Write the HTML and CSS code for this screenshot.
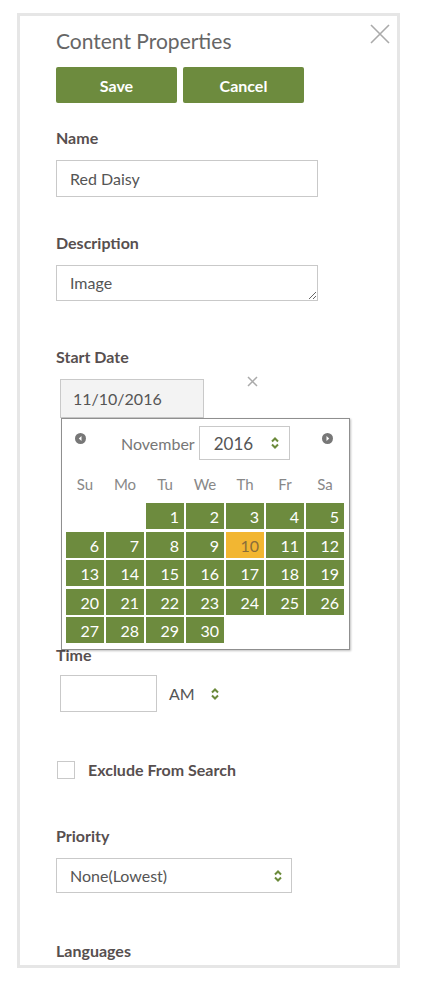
FILE: index.html
```html
<!DOCTYPE html>
<html lang="en">
<head>
    <meta charset="UTF-8">
    <title>Content Properties</title>
    <link rel="stylesheet" href="styles.css">
</head>
<body>
    <div class="panel">
        <div class="panel-head">
            <h1 class="panel-title">Content Properties</h1>
            <svg class="close-icon" width="20" height="20" viewBox="0 0 20 20">
                <path d="M1 1 L19 19 M19 1 L1 19" stroke="#aaa" stroke-width="1.6" fill="none"/>
            </svg>
        </div>

        <div class="actions">
            <button class="btn">Save</button>
            <button class="btn">Cancel</button>
        </div>

        <label class="field-label label-name">Name</label>
        <input class="text-input name-input" type="text" value="Red Daisy">

        <label class="field-label label-desc">Description</label>
        <textarea class="text-input desc-input">Image</textarea>

        <label class="field-label label-start">Start Date</label>
        <div class="date-row">
            <div class="date-field">
                <div class="date-input">11/10/2016</div>

                <!-- calendar popup -->
                <div class="calendar">
                    <div class="cal-nav">
                        <span class="nav-btn prev">
                            <svg width="11" height="11" viewBox="0 0 11 11"><circle cx="5.5" cy="5.5" r="5.5" fill="#777"/><path d="M6.5 3 L3.8 5.5 L6.5 8 Z" fill="#fff"/></svg>
                        </span>
                        <span class="cal-month">November</span>
                        <span class="cal-year">
                            2016
                            <svg class="updown" width="10" height="14" viewBox="0 0 10 14"><path d="M2 5.5 L5 2.5 L8 5.5 M2 8.5 L5 11.5 L8 8.5" stroke="#6b8a3a" stroke-width="2" fill="none"/></svg>
                        </span>
                        <span class="nav-btn next">
                            <svg width="11" height="11" viewBox="0 0 11 11"><circle cx="5.5" cy="5.5" r="5.5" fill="#777"/><path d="M4.5 3 L7.2 5.5 L4.5 8 Z" fill="#fff"/></svg>
                        </span>
                    </div>
                    <div class="cal-days">
                        <span>Su</span><span>Mo</span><span>Tu</span><span>We</span><span>Th</span><span>Fr</span><span>Sa</span>
                    </div>
                    <div class="cal-grid" id="cal-grid"></div>
                </div>
            </div>
            <svg class="clear-icon" width="11" height="11" viewBox="0 0 11 11">
                <path d="M1 1 L10 10 M10 1 L1 10" stroke="#aaa" stroke-width="1.5" fill="none"/>
            </svg>
        </div>

        <label class="field-label label-time">Time</label>
        <div class="time-row">
            <input class="text-input time-input" type="text">
            <span class="ampm">AM</span>
            <svg class="updown" width="10" height="14" viewBox="0 0 10 14"><path d="M2 5.5 L5 2.5 L8 5.5 M2 8.5 L5 11.5 L8 8.5" stroke="#6b8a3a" stroke-width="2" fill="none"/></svg>
        </div>

        <div class="check-row">
            <span class="checkbox"></span>
            <span class="check-text">Exclude From Search</span>
        </div>

        <label class="field-label label-priority">Priority</label>
        <div class="select-box">
            <span>None(Lowest)</span>
            <svg class="updown" width="10" height="14" viewBox="0 0 10 14"><path d="M2 5.5 L5 2.5 L8 5.5 M2 8.5 L5 11.5 L8 8.5" stroke="#6b8a3a" stroke-width="2" fill="none"/></svg>
        </div>

        <label class="field-label label-lang">Languages</label>
    </div>

    <script>
        // monta os dias de novembro 2016 (comeca na terca)
        var grid = document.getElementById('cal-grid');
        for (var i = 0; i < 2; i++) {
            grid.appendChild(document.createElement('span'));
        }
        for (var d = 1; d <= 30; d++) {
            var cell = document.createElement('span');
            cell.className = d === 10 ? 'day today' : 'day';
            cell.textContent = d;
            grid.appendChild(cell);
        }
    </script>
</body>
</html>
```

FILE: styles.css
```css
body {
    margin: 0;
    background: #fff;
    font-family: Lato, "Open Sans", sans-serif;
    color: #555;
}
.panel {
    margin: 13px 0 0 17px;
    width: 383px;
    box-sizing: border-box;
    border: 3px solid #e6e6e6;
    padding: 8px 7px 5px 36px;
    display: flex;
    flex-direction: column;
    align-items: flex-start;
}
.panel-head {
    display: flex;
    justify-content: space-between;
    align-items: flex-start;
    align-self: stretch;
}
.panel-title {
    margin: 0;
    font-size: 21px;
    font-weight: 400;
    line-height: 34px;
    color: #666;
}
.actions {
    display: flex;
    gap: 6px;
    margin-top: 9px;
}
.btn {
    width: 121px;
    height: 36px;
    border: 0;
    border-radius: 2px;
    background: #6d8b3e;
    color: #fff;
    font-family: Lato, sans-serif;
    font-weight: 700;
    font-size: 16px;
}
.field-label {
    display: block;
    font-size: 16px;
    font-weight: 700;
    line-height: 18px;
    color: #574f4f;
}
.label-name { margin-top: 26px; }
.label-desc { margin-top: 37px; }
.label-start { margin-top: 47px; }
.label-time { margin-top: 228px; }
.label-priority { margin-top: 48px; }
.label-lang { margin-top: 49px; }

.text-input {
    box-sizing: border-box;
    border: 1px solid #c9c9c9;
    background: #fff;
    font-family: Lato, sans-serif;
    font-size: 16px;
    color: #555;
    padding: 0 13px;
    margin: 13px 0 0 0;
}
.name-input {
    width: 262px;
    height: 37px;
}
.desc-input {
    width: 262px;
    height: 36px;
    padding-top: 8px;
    line-height: 18px;
    overflow: hidden;
    display: block;
}
.date-row {
    display: flex;
    margin: 13px 0 0 4px;
}
.date-field {
    position: relative;
}
.date-input {
    box-sizing: border-box;
    width: 144px;
    height: 39px;
    border: 1px solid #c9c9c9;
    background: #f3f3f3;
    font-size: 16px;
    line-height: 37px;
    padding-left: 12px;
    color: #555;
}
.clear-icon {
    margin: -3px 0 0 43px;
}
.calendar {
    position: absolute;
    top: 100%;
    left: 1px;
    width: 289px;
    box-sizing: border-box;
    background: #fff;
    border: 1px solid #8f8f8f;
    box-shadow: 1px 1px 2px rgba(0, 0, 0, 0.25);
    padding: 7px 5px 6px 4px;
    z-index: 2;
}
.cal-nav {
    display: flex;
    align-items: center;
    height: 34px;
}
.nav-btn {
    display: flex;
}
.prev {
    margin: -10px 0 0 9px;
}
.next {
    margin: -10px 11px 0 auto;
}
.cal-month {
    margin-left: 35px;
    font-size: 16px;
    color: #777;
}
.cal-year {
    box-sizing: border-box;
    display: flex;
    align-items: center;
    justify-content: space-between;
    width: 91px;
    height: 34px;
    margin-left: 4px;
    border: 1px solid #c9c9c9;
    padding: 0 9px 0 14px;
    font-size: 17px;
    color: #555;
}
.cal-days {
    display: grid;
    grid-template-columns: repeat(7, 38px);
    column-gap: 2px;
    margin-top: 14px;
    height: 20px;
    line-height: 20px;
    text-align: center;
    font-size: 15px;
    color: #888;
}
.cal-grid {
    display: grid;
    grid-template-columns: repeat(7, 38px);
    grid-auto-rows: 26px;
    gap: 2.5px 2px;
    margin-top: 9px;
}
.day {
    background: #6d8b3e;
    color: #fff;
    font-size: 16px;
    line-height: 27px;
    text-align: right;
    padding-right: 5px;
}
.day.today {
    background: #f2b632;
    color: #8a6d3b;
}
.time-row {
    display: flex;
    align-items: center;
    margin: 11px 0 0 4px;
}
.time-input {
    width: 97px;
    height: 37px;
    margin: 0;
}
.ampm {
    margin-left: 12px;
    font-size: 16px;
    color: #555;
}
.time-row .updown {
    margin-left: 15px;
}
.check-row {
    display: flex;
    align-items: center;
    margin: 48px 0 0 1px;
}
.checkbox {
    box-sizing: border-box;
    width: 18px;
    height: 18px;
    border: 1px solid #c9c9c9;
}
.check-text {
    margin-left: 13px;
    font-size: 16px;
    font-weight: 700;
    color: #574f4f;
}
.select-box {
    box-sizing: border-box;
    display: flex;
    align-items: center;
    justify-content: space-between;
    width: 236px;
    height: 35px;
    margin-top: 13px;
    border: 1px solid #c9c9c9;
    padding: 0 8px 0 13px;
    font-size: 16px;
    color: #555;
}
```
